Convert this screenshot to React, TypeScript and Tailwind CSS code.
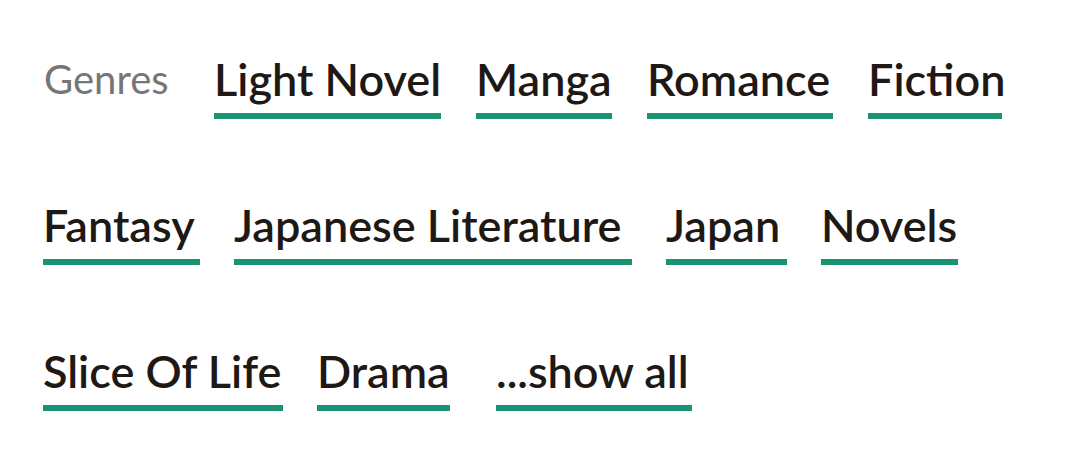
import React from 'react';

type Genre = { label: string; w: string };

const rows: Genre[][] = [
  [
    { label: 'Light Novel', w: 'w-[227px]' },
    { label: 'Manga', w: 'w-[136px]' },
    { label: 'Romance', w: 'w-[186px]' },
    { label: 'Fiction', w: 'w-[134px]' },
  ],
  [
    { label: 'Fantasy', w: 'w-[157px]' },
    { label: 'Japanese Literature', w: 'w-[398px]' },
    { label: 'Japan', w: 'w-[121px]' },
    { label: 'Novels', w: 'w-[137px]' },
  ],
  [
    { label: 'Slice Of Life', w: 'w-[240px]' },
    { label: 'Drama', w: 'w-[133px]' },
    { label: '...show all', w: 'w-[196px] ml-[12px]' },
  ],
];

const Tag = ({ genre }: { genre: Genre }) => (
  <a
    className={`block shrink-0 whitespace-nowrap border-b-[6px] border-[#1b9373] pb-[11px] text-[45px] leading-[46px] font-semibold text-[#1e1915] ${genre.w}`}
  >
    {genre.label}
  </a>
);

export default function App() {
  return (
    <div
      className="w-[1079px] h-[465px] bg-white pl-[43px] pt-[56px]"
      style={{ fontFamily: 'Lato, "Open Sans", sans-serif' }}
    >
      <div className="flex flex-col gap-[83px]">
        {rows.map((row, i) => (
          <div key={i} className={`flex items-start ${i === 0 ? 'gap-[35px]' : 'gap-[34px]'}`}>
            {i === 0 && (
              <span className="w-[136px] shrink-0 pl-[1px] text-[40px] leading-[46px] text-[#767676]">Genres</span>
            )}
            {row.map((g) => (
              <Tag key={g.label} genre={g} />
            ))}
          </div>
        ))}
      </div>
    </div>
  );
}
